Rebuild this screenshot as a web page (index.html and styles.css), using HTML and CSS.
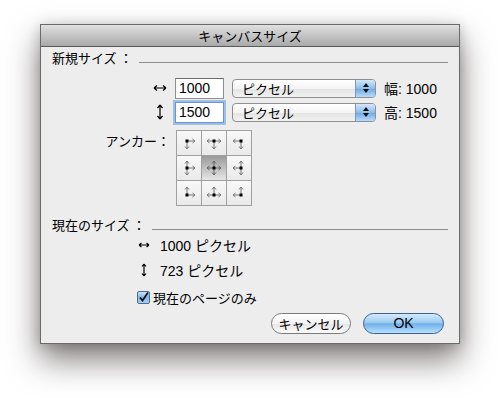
FILE: index.html
```html
<!DOCTYPE html>
<html lang="ja">
<head>
	<meta name="viewport" content="width=device-width, initial-scale=1">
	<title>キャンバスサイズ</title>
	<link rel="stylesheet" href="styles.css">
</head>
<body>
<div class="dialog">
	<div class="titlebar">キャンバスサイズ</div>
	<div class="content">

		<div class="section"><span>新規サイズ ：</span><i class="rule"></i></div>

		<div class="size-row first">
			<span class="dir">
				<svg width="16" height="16" viewBox="0 0 16 16"><path d="M2 8h12M2 8l3-2.5M2 8l3 2.5M14 8l-3-2.5M14 8l-3 2.5" stroke="#000" stroke-width="1.2" fill="none"/></svg>
			</span>
			<span class="field">1000</span>
			<span class="popup"><span class="popup-text">ピクセル</span><span class="stepper"><svg width="8" height="12" viewBox="0 0 8 12"><path d="M4 1L7 5H1zM4 11L1 7h6z" fill="#111"/></svg></span></span>
			<span class="info">幅: 1000</span>
		</div>

		<div class="size-row">
			<span class="dir">
				<svg width="16" height="16" viewBox="0 0 16 16"><path d="M8 1v14M8 1L5.5 4M8 1l2.5 3M8 15l-2.5-3M8 15l2.5-3" stroke="#000" stroke-width="1.2" fill="none"/></svg>
			</span>
			<span class="field focus">1500</span>
			<span class="popup"><span class="popup-text">ピクセル</span><span class="stepper"><svg width="8" height="12" viewBox="0 0 8 12"><path d="M4 1L7 5H1zM4 11L1 7h6z" fill="#111"/></svg></span></span>
			<span class="info">高: 1500</span>
		</div>

		<div class="anchor-row">
			<span class="anchor-label">アンカー：</span>
			<div class="anchor">
				<span class="cell"><svg width="16" height="16" viewBox="0 0 16 16"><path d="M6 6h8M14 6l-2.5-2M14 6l-2.5 2M6 6v8M6 14l-2-2.5M6 14l2-2.5" stroke="#777" fill="none"/><rect x="4.5" y="4.5" width="3" height="3" fill="#000"/></svg></span>
				<span class="cell"><svg width="16" height="16" viewBox="0 0 16 16"><path d="M1 6h14M1 6l2.5-2M1 6l2.5 2M15 6l-2.5-2M15 6l-2.5 2M8 6v8M8 14l-2-2.5M8 14l2-2.5" stroke="#777" fill="none"/><rect x="6.5" y="4.5" width="3" height="3" fill="#000"/></svg></span>
				<span class="cell"><svg width="16" height="16" viewBox="0 0 16 16"><path d="M10 6H2M2 6l2.5-2M2 6l2.5 2M10 6v8M10 14l-2-2.5M10 14l2-2.5" stroke="#777" fill="none"/><rect x="8.5" y="4.5" width="3" height="3" fill="#000"/></svg></span>
				<span class="cell"><svg width="16" height="16" viewBox="0 0 16 16"><path d="M6 1v14M6 1L4 3.5M6 1l2 2.5M6 15l-2-2.5M6 15l2-2.5M6 8h8M14 8l-2.5-2M14 8l-2.5 2" stroke="#777" fill="none"/><rect x="4.5" y="6.5" width="3" height="3" fill="#000"/></svg></span>
				<span class="cell on"><svg width="16" height="16" viewBox="0 0 16 16"><path d="M1 8h14M1 8l2.5-2M1 8l2.5 2M15 8l-2.5-2M15 8l-2.5 2M8 1v14M8 1L6 3.5M8 1l2 2.5M8 15l-2-2.5M8 15l2-2.5" stroke="#666" fill="none"/><rect x="6.5" y="6.5" width="3" height="3" fill="#000"/></svg></span>
				<span class="cell"><svg width="16" height="16" viewBox="0 0 16 16"><path d="M10 1v14M10 1L8 3.5M10 1l2 2.5M10 15l-2-2.5M10 15l2-2.5M10 8H2M2 8l2.5-2M2 8l2.5 2" stroke="#777" fill="none"/><rect x="8.5" y="6.5" width="3" height="3" fill="#000"/></svg></span>
				<span class="cell"><svg width="16" height="16" viewBox="0 0 16 16"><path d="M6 10V2M6 2L4 4.5M6 2l2 2.5M6 10h8M14 10l-2.5-2M14 10l-2.5 2" stroke="#777" fill="none"/><rect x="4.5" y="8.5" width="3" height="3" fill="#000"/></svg></span>
				<span class="cell"><svg width="16" height="16" viewBox="0 0 16 16"><path d="M1 10h14M1 10l2.5-2M1 10l2.5 2M15 10l-2.5-2M15 10l-2.5 2M8 10V2M8 2L6 4.5M8 2l2 2.5" stroke="#777" fill="none"/><rect x="6.5" y="8.5" width="3" height="3" fill="#000"/></svg></span>
				<span class="cell"><svg width="16" height="16" viewBox="0 0 16 16"><path d="M10 10V2M10 2L8 4.5M10 2l2 2.5M10 10H2M2 10l2.5-2M2 10l2.5 2" stroke="#777" fill="none"/><rect x="8.5" y="8.5" width="3" height="3" fill="#000"/></svg></span>
			</div>
		</div>

		<div class="section current"><span>現在のサイズ ：</span><i class="rule"></i></div>

		<div class="cur-row">
			<span class="dir small"><svg width="14" height="14" viewBox="0 0 14 14"><path d="M2 7h10M2 7l2.5-2M2 7l2.5 2M12 7l-2.5-2M12 7l-2.5 2" stroke="#000" stroke-width="1.2" fill="none"/></svg></span>
			<span>1000 ピクセル</span>
		</div>
		<div class="cur-row second">
			<span class="dir small"><svg width="14" height="14" viewBox="0 0 14 14"><path d="M7 1v12M7 1L5 3.5M7 1l2 2.5M7 13l-2-2.5M7 13l2-2.5" stroke="#000" stroke-width="1.2" fill="none"/></svg></span>
			<span>723 ピクセル</span>
		</div>

		<label class="check-row">
			<svg class="check" width="13" height="13" viewBox="0 0 13 13"><defs><linearGradient id="cb" x1="0" y1="0" x2="0" y2="1"><stop offset="0" stop-color="#d4e8fa"/><stop offset="0.5" stop-color="#7fb4e6"/><stop offset="1" stop-color="#a9d3f7"/></linearGradient></defs><rect x="0.5" y="0.5" width="12" height="12" rx="1.5" fill="url(#cb)" stroke="#4d6c94"/><path d="M3 6.5l2.5 3L11 1.5" stroke="#111" stroke-width="1.8" fill="none"/></svg>
			<span>現在のページのみ</span>
		</label>

		<div class="buttons">
			<span class="btn">キャンセル</span>
			<span class="btn primary">OK</span>
		</div>
	</div>
</div>
</body>
</html>
```

FILE: styles.css
```css
* {
	box-sizing: border-box;
	margin: 0;
	padding: 0;
}

body {
	font-family: "Liberation Sans", "Noto Sans CJK JP", sans-serif;
	font-size: 13px;
	color: #000;
	background: #fff;
	width: 498px;
	height: 398px;
	overflow: hidden;
}

.dialog {
	width: 420px;
	height: 320px;
	margin: 24px 0 0 40px;
	border: 1px solid #6a6a6a;
	background: #ededed;
	box-shadow: 0 16px 30px rgba(50,40,38,0.6), 0 2px 12px rgba(0,0,0,0.2);
}

.titlebar {
	height: 22px;
	line-height: 21px;
	text-align: center;
	font-size: 13px;
	background: linear-gradient(#e0e0e0, #a9a9a9);
	border-bottom: 1px solid #5a5a5a;
	font-family: "Noto Sans CJK JP", sans-serif;
}

.content {
	padding: 3px 11px 0 11px;
	display: flex;
	flex-direction: column;
}

.section {
	display: flex;
	align-items: flex-end;
	height: 16px;
	line-height: 16px;
	font-family: "Noto Sans CJK JP", sans-serif;
}

.section span {
	white-space: pre;
	margin-right: 6px;
}

.rule {
	flex: 1;
	border-bottom: 1px solid #8c8c8c;
	margin-bottom: 3px;
}

.size-row {
	display: flex;
	align-items: center;
	margin-left: 100px;
	margin-top: 2px;
	height: 22px;
	gap: 7px;
}

.size-row.first {
	margin-top: 11px;
}

.dir {
	width: 16px;
	height: 16px;
	display: flex;
	align-items: center;
	justify-content: center;
}

.field {
	width: 49px;
	height: 21px;
	background: #fff;
	border: 1px solid #8e8e8e;
	border-top-color: #6a6a6a;
	padding: 0 0 0 3px;
	line-height: 18px;
	font-size: 14px;
}

.field.focus {
	border-color: #6b95c9;
	box-shadow: 0 0 0 2px #9cc0ea;
}

.popup {
	width: 144px;
	height: 19px;
	margin-left: 1px;
	display: flex;
	border: 1px solid #8f8f8f;
	border-radius: 4px;
	background: linear-gradient(#ffffff, #f4f4f4 50%, #e2e2e2 51%, #f2f2f2);
	overflow: hidden;
}

.popup-text {
	flex: 1;
	padding-left: 9px;
	line-height: 17px;
	font-family: "Noto Sans CJK JP", sans-serif;
	font-size: 13px;
}

.stepper {
	width: 20px;
	display: flex;
	align-items: center;
	justify-content: center;
	border-left: 1px solid #7f98b8;
	background: linear-gradient(#d5e8f9, #8cbde9 50%, #6ea9e2 51%, #b6dbfb);
}

.info {
	margin-left: 1px;
	white-space: nowrap;
	font-size: 14px;
}

.anchor-row {
	display: flex;
	align-items: flex-start;
	margin-top: 7px;
	gap: 6px;
}

.anchor-label {
	width: 118px;
	text-align: right;
	line-height: 16px;
	margin-top: 3px;
	font-family: "Noto Sans CJK JP", sans-serif;
}

.anchor {
	display: grid;
	grid-template-columns: repeat(3, 24px);
	grid-template-rows: repeat(3, 24px);
	border: 1px solid #a0a0a0;
	background: #a0a0a0;
	gap: 1px;
}

.cell {
	background: linear-gradient(#f8f8f8, #eaeaea);
	display: flex;
	align-items: center;
	justify-content: center;
}

.cell.on {
	background: linear-gradient(#9a9a9a, #e6e6e6);
}

.section.current {
	margin-top: 11px;
}

.cur-row {
	display: flex;
	align-items: center;
	margin-left: 85px;
	margin-top: 4px;
	height: 16px;
	gap: 9px;
	font-size: 14px;
}

.cur-row.second {
	margin-top: 9px;
}

.dir.small {
	width: 14px;
	height: 14px;
}

.check-row {
	display: flex;
	align-items: center;
	margin-left: 85px;
	margin-top: 11px;
	height: 16px;
	gap: 3px;
	font-family: "Noto Sans CJK JP", sans-serif;
}

.buttons {
	display: flex;
	justify-content: flex-end;
	gap: 12px;
	margin-top: 8px;
	padding-right: 4px;
}

.btn {
	width: 80px;
	height: 21px;
	border: 1px solid #7a7a7a;
	border-radius: 11px;
	background: linear-gradient(#ffffff, #f3f3f3 50%, #e6e6e6 51%, #fbfbfb);
	text-align: center;
	line-height: 19px;
	font-family: "Noto Sans CJK JP", sans-serif;
	font-size: 13px;
}

.btn.primary {
	width: 81px;
	border-color: #3f5f8d;
	background: linear-gradient(#d4ebfd, #9ccbf2 45%, #6fb0ea 52%, #b8e0ff);
	font-family: "Liberation Sans", sans-serif;
	font-size: 14px;
}
```
